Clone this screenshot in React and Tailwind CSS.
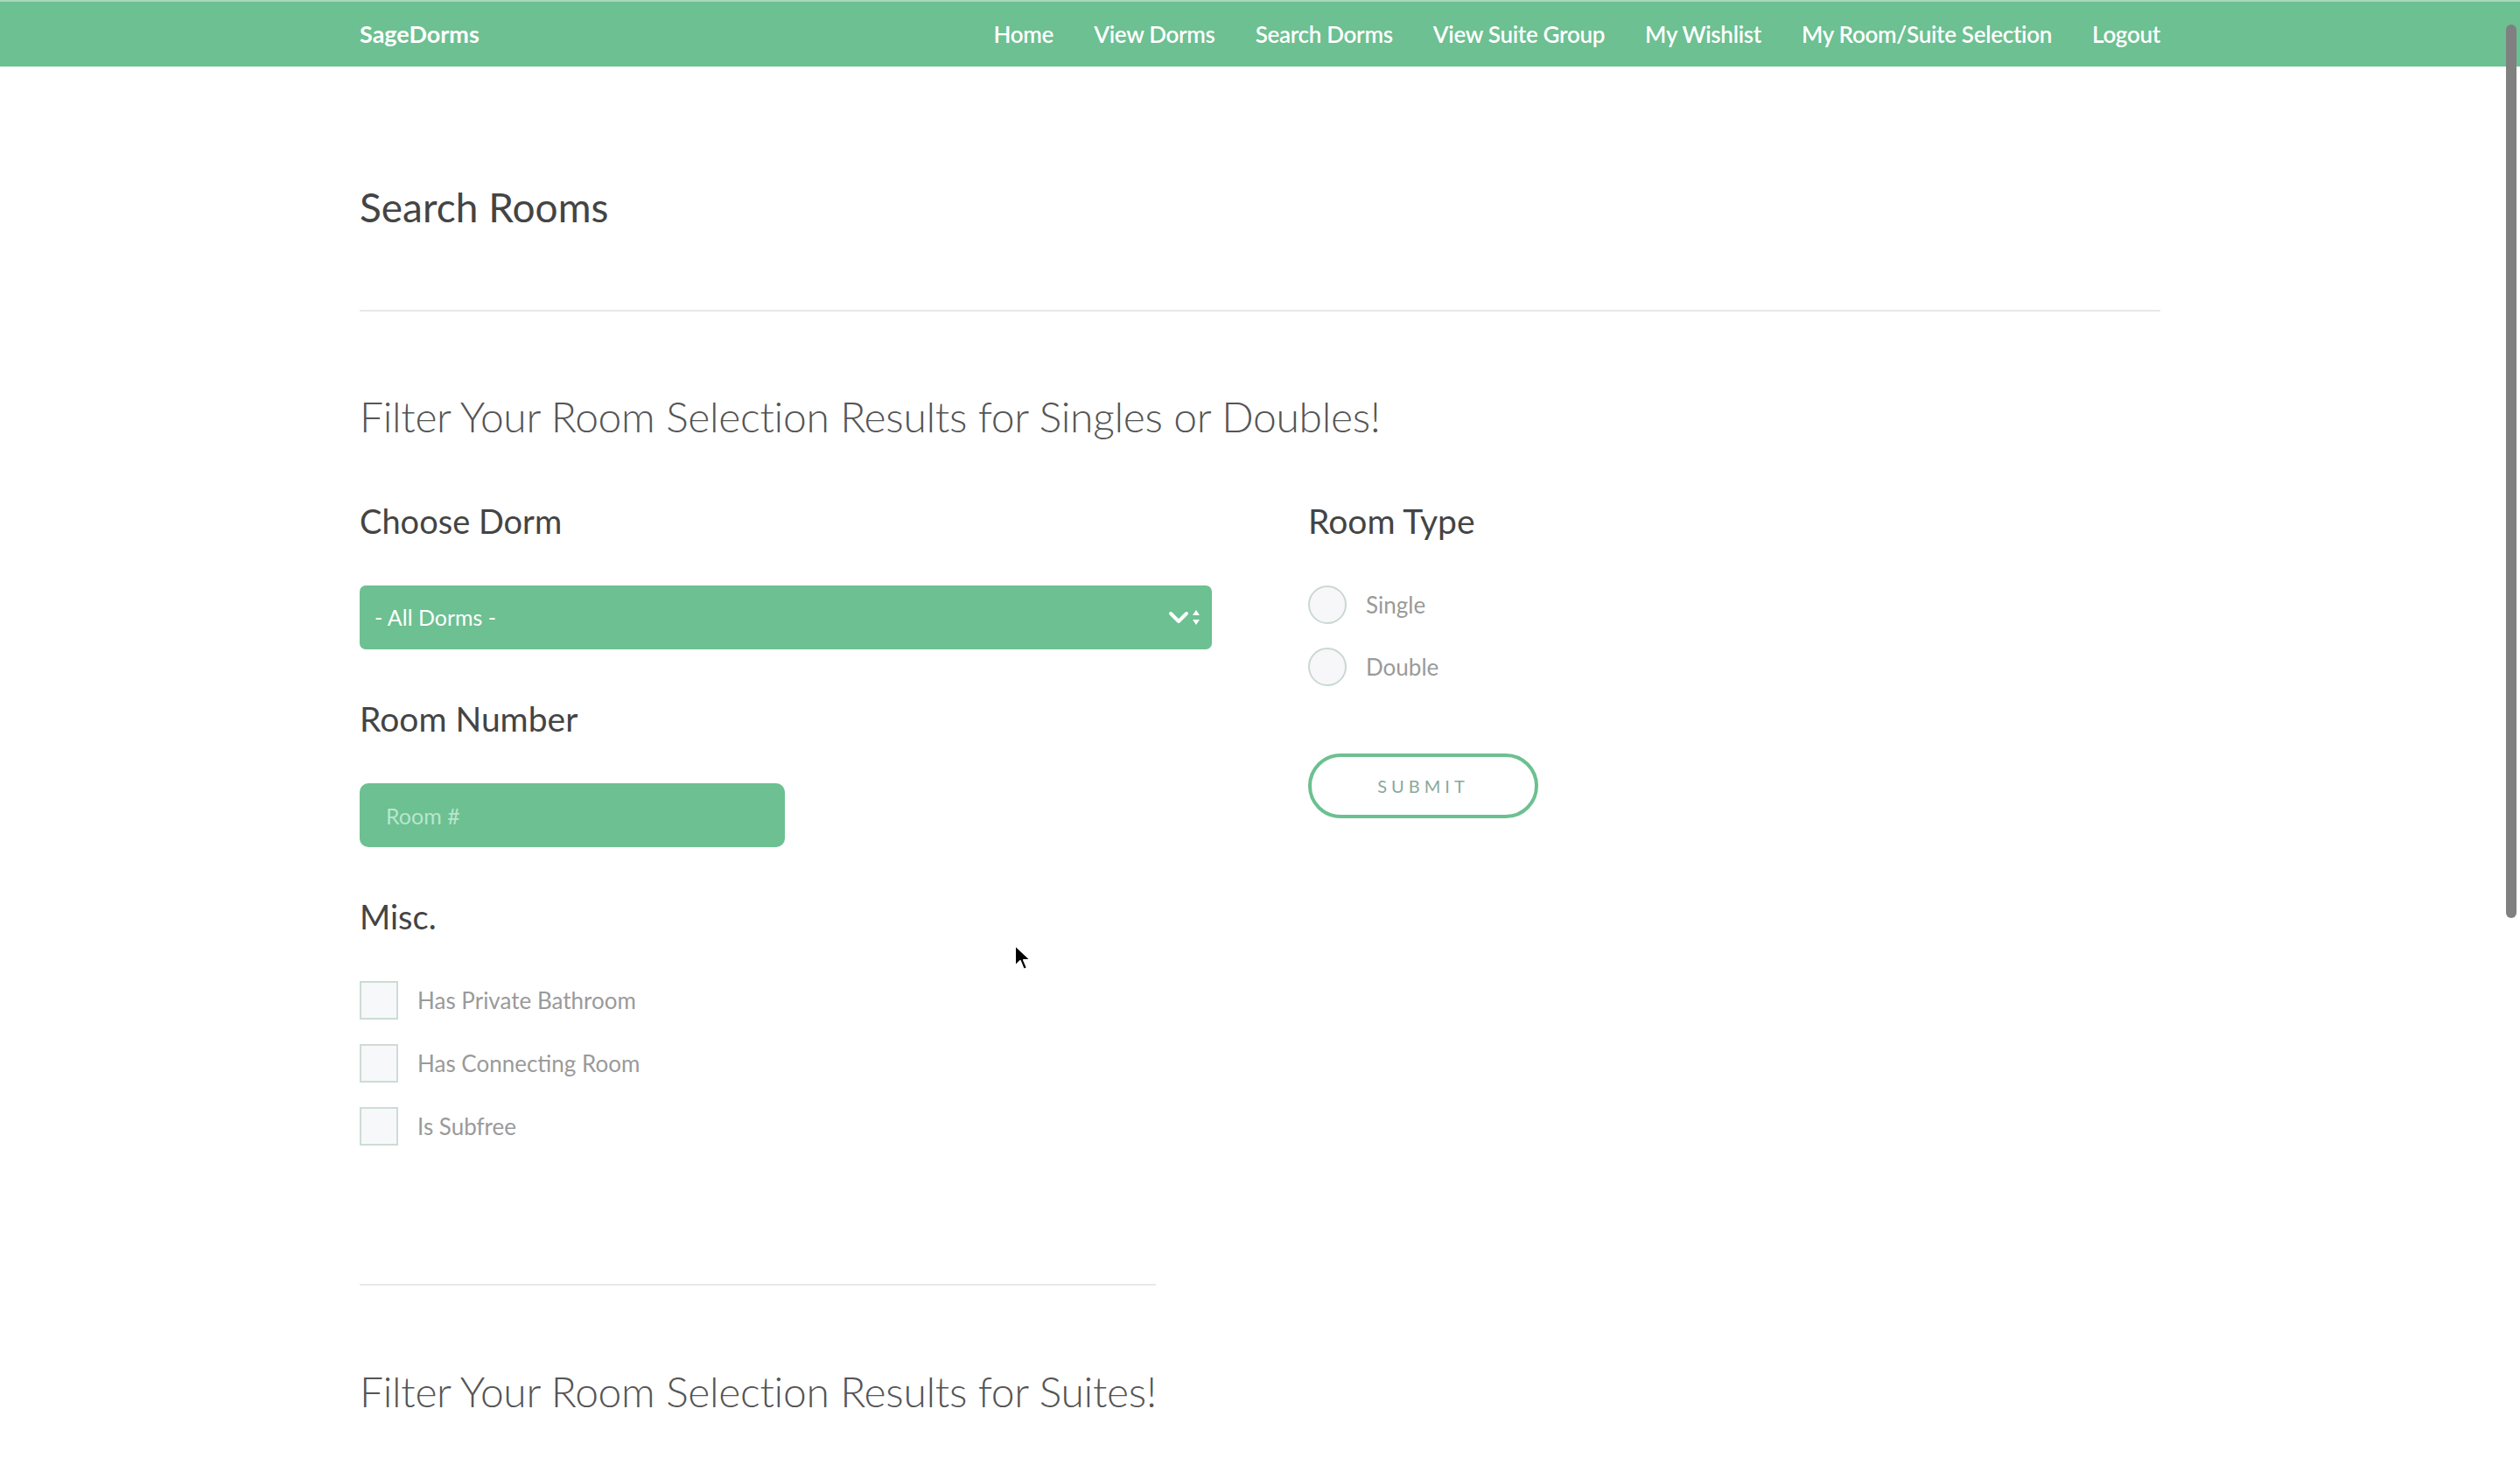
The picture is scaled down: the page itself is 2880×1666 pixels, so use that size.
import React, { useState } from "react";

const navLinks = [
  "Home",
  "View Dorms",
  "Search Dorms",
  "View Suite Group",
  "My Wishlist",
  "My Room/Suite Selection",
  "Logout",
];

const miscOptions = ["Has Private Bathroom", "Has Connecting Room", "Is Subfree"];

function SelectArrows() {
  return (
    <svg width="44" height="28" viewBox="0 0 44 28" className="shrink-0">
      <path d="M3 9 L12 18 L21 9" fill="none" stroke="#ffffff" strokeWidth="4" strokeLinecap="round" strokeLinejoin="round" />
      <path d="M28 11 L32 5 L36 11 Z" fill="#ffffff" />
      <path d="M28 16 L32 22 L36 16 Z" fill="#ffffff" />
    </svg>
  );
}

function Navbar() {
  return (
    <nav className="h-[76px] bg-[#6cc091] border-t-2 border-[#a8d9bc]">
      <div className="w-[2058px] mx-auto h-full flex items-center justify-between">
        <span className="text-white font-bold text-[27px]">SageDorms</span>
        <ul className="flex items-center gap-[46px]">
          {navLinks.map((link) => (
            <li key={link} className="text-white font-semibold text-[26px] tracking-[-0.3px]">
              {link}
            </li>
          ))}
        </ul>
      </div>
    </nav>
  );
}

export default function App() {
  const [roomType, setRoomType] = useState(null);
  const [misc, setMisc] = useState({});
  const [roomNumber, setRoomNumber] = useState("");

  return (
    <div className="min-h-screen bg-white relative" style={{ fontFamily: "Lato, 'Open Sans', sans-serif" }}>
      <Navbar />

      <main className="w-[2058px] mx-auto">
        <h1 className="mt-[133px] text-[46px] leading-[56px] text-[#444444]">Search Rooms</h1>
        <hr className="mt-[89px] border-t-2 border-[#e8e8e8]" />

        <h2 className="mt-[90px] text-[48px] leading-[60px] font-light text-[#555555] tracking-[-0.3px]">
          Filter Your Room Selection Results for Singles or Doubles!
        </h2>

        <div className="grid grid-cols-2 gap-x-[110px] mt-[67px]">
          {/* left column */}
          <div>
            <h3 className="text-[38px] leading-[44px] text-[#444444]">Choose Dorm</h3>
            <div className="mt-[52px] h-[73px] rounded-[7px] bg-[#6cc091] flex items-center justify-between pl-[17px] pr-[6px]">
              <span className="text-white text-[25px]">- All Dorms -</span>
              <SelectArrows />
            </div>

            <h3 className="mt-[57px] text-[39px] leading-[44px] text-[#444444]">Room Number</h3>
            <input
              value={roomNumber}
              onChange={(e) => setRoomNumber(e.target.value)}
              placeholder="Room #"
              className="mt-[52px] block w-[486px] h-[73px] rounded-[10px] bg-[#6cc091] px-[30px] text-[25px] text-white placeholder:text-[#b9e6cc] outline-none"
            />

            <h3 className="mt-[57px] text-[38px] leading-[44px] text-[#444444]">Misc.</h3>
            <div className="mt-[52px] flex flex-col gap-[28px]">
              {miscOptions.map((opt) => (
                <label key={opt} className="flex items-center gap-[22px] h-[44px] cursor-pointer">
                  <span
                    onClick={() => setMisc({ ...misc, [opt]: !misc[opt] })}
                    className={`w-[44px] h-[44px] border-2 border-[#cddcd5] ${misc[opt] ? "bg-[#6cc091]" : "bg-[#f7f8fa]"}`}
                  />
                  <span className="text-[26px] text-[#9a9a9a]">{opt}</span>
                </label>
              ))}
            </div>
          </div>

          {/* right column */}
          <div>
            <h3 className="text-[39px] leading-[44px] text-[#444444]">Room Type</h3>
            <div className="mt-[52px] flex flex-col gap-[27px]">
              {["Single", "Double"].map((type) => (
                <label key={type} className="flex items-center gap-[22px] h-[44px] cursor-pointer" onClick={() => setRoomType(type)}>
                  <span
                    className={`w-[44px] h-[44px] rounded-full border-2 border-[#c9d9d2] ${roomType === type ? "bg-[#6cc091]" : "bg-[#f7f7f9]"}`}
                  />
                  <span className="text-[26px] text-[#9a9a9a]">{type}</span>
                </label>
              ))}
            </div>
            <button
              type="button"
              className="mt-[77px] w-[263px] h-[74px] rounded-full border-[4px] border-[#6cc091] text-[20px] tracking-[5px] text-[#8aa89a] bg-white"
            >
              SUBMIT
            </button>
          </div>
        </div>

        <div className="w-[910px]">
          <hr className="mt-[158px] border-t-2 border-[#e8e8e8]" />
          <h2 className="mt-[91px] text-[48px] leading-[60px] font-light text-[#555555] tracking-[-0.3px] whitespace-nowrap">
            Filter Your Room Selection Results for Suites!
          </h2>
        </div>
      </main>

      {/* overlay scrollbar */}
      <div className="fixed right-[4px] top-[28px] w-[12px] h-[1021px] rounded-full bg-[#808080]" />

      {/* mouse cursor */}
      <svg className="absolute left-[1158px] top-[1078px]" width="22" height="32" viewBox="0 0 22 32">
        <path d="M2 2 L2 26 L8 20 L12 30 L16 28 L12 19 L20 19 Z" fill="#000000" stroke="#ffffff" strokeWidth="2" strokeLinejoin="round" />
      </svg>
    </div>
  );
}
